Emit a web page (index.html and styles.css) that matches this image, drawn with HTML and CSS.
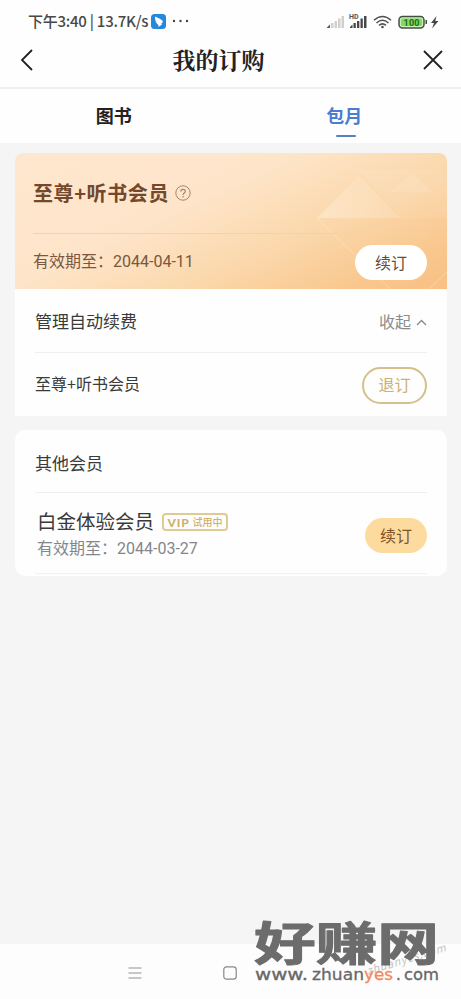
FILE: index.html
```
<!DOCTYPE html>
<html lang="zh-CN">
<head>
<meta charset="utf-8">
<title>我的订购</title>
<link rel="stylesheet" href="styles.css">
</head>
<body>
<div class="status">
  <span class="clock">下午3:40 | 13.7K/s</span>
  <svg class="app" width="15" height="15" viewBox="0 0 15 15"><rect width="15" height="15" rx="3.5" fill="#2488dc"/><path d="M4 2.500c2.500 1.200 6.500 2.700 7.700 4.500.6 1-.6 2.200-1.400 3l.8.4-3.700 2.600.2-1.800C5.200 10 4 6 4 2.500z" fill="#fff"/></svg>
  <svg class="dots" width="17" height="4" viewBox="0 0 17 4" fill="#444"><circle cx="2" cy="2" r="1.200"/><circle cx="8.500" cy="2" r="1.200"/><circle cx="15" cy="2" r="1.200"/></svg>
  <svg class="signals" width="115" height="18" viewBox="0 0 115 18">
    <g fill="#d0d0d0"><rect x="5" y="11" width="2.500" height="5"/><rect x="8.500" y="9" width="2.500" height="7"/><rect x="12" y="6.500" width="2.500" height="9.500"/><rect x="15.500" y="4" width="2.500" height="12"/></g>
    <path d="M.5 16L4 12.500V16z" fill="#555"/>
    <text class="hd" x="23" y="7">HD</text>
    <g fill="#484848"><path d="M24 16v-1l2.500-2.500V16z"/><rect x="27.500" y="11" width="2.300" height="5"/><rect x="31" y="9" width="2.300" height="7"/><rect x="34.500" y="6.500" width="2.300" height="9.500"/><rect x="38" y="4" width="2.500" height="12"/></g>
    <g fill="none" stroke="#505050" stroke-width="1.500"><path d="M48 8.200Q56.500.8 65 8.200"/><path d="M50.500 11Q56.500 5.600 62.500 11"/><path d="M53 13.400Q56.500 10.400 60 13.400"/></g><circle cx="56.500" cy="15" r="1.300" fill="#505050"/>
    <rect x="73" y="4.500" width="25" height="11.500" rx="3.500" fill="#c7f2b5" stroke="#484c48" stroke-width="1.500"/>
    <rect x="75" y="6.500" width="21" height="7.500" rx="1.500" fill="#82d95c"/>
    <text class="level" x="77.500" y="13.600" textLength="16">100</text>
    <rect x="99.500" y="8" width="1.500" height="4" fill="#484848"/>
    <path d="M110.500 4l-5.500 7h3l-2 5.500 6.500-7.500h-3.200z" fill="#484848"/>
  </svg>
</div>
<header class="head">
  <svg width="20" height="24" viewBox="0 0 20 24"><path d="M15 2L5 12l10 10" fill="none" stroke="#222" stroke-width="1.800"/></svg>
  <h1>我的订购</h1>
  <svg width="20" height="20" viewBox="0 0 20 20"><path d="M1 1l18 18M19 1L1 19" stroke="#222" stroke-width="1.800"/></svg>
</header>
<nav class="tabs"><div>图书</div><div class="active">包月</div></nav>
<main>
  <section class="card plan">
    <div class="gold">
      <svg class="facets" width="432" height="136" viewBox="0 0 432 136">
        <defs><linearGradient id="facet" x1="0" y1="1" x2="1" y2="0"><stop offset="0" stop-color="#fff" stop-opacity=".3"/><stop offset="1" stop-color="#fff" stop-opacity=".03"/></linearGradient></defs>
        <path d="M302 65L344 23L386 65z" fill="url(#facet)"/>
        <path d="M344 17H432V65H386z" fill="#fff" opacity=".07"/>
        <path d="M375 39L397 21L418 39z" fill="#fff" opacity=".12"/>
        <path d="M302 65L375 136M414 136L432 119" fill="none" stroke="#ffedd3" stroke-opacity=".45"/>
      </svg>
      <div class="name"><h2>至尊+听书会员</h2><svg width="16" height="16" viewBox="0 0 16 16"><circle cx="8" cy="8" r="7.200" fill="none" stroke="#a48569"/><path d="M5.800 6.500C5.800 3.600 10.300 3.700 10.300 6.300c0 1.700-2.200 1.600-2.200 3.600" fill="none" stroke="#a48569" stroke-width="1.200"/><circle cx="8.100" cy="11.800" r=".8" fill="#a48569"/></svg></div>
      <div class="expiry"><span class="date">有效期至：2044-04-11</span><button class="white">续订</button></div>
    </div>
    <div class="manage"><span>管理自动续费</span><span class="collapse">收起 <svg width="11" height="7" viewBox="0 0 11 7"><path d="M1 6l4.500-4.500L10 6" fill="none" stroke="#888" stroke-width="1.300"/></svg></span></div>
    <div class="renewal"><span>至尊+听书会员</span><button class="outline">退订</button></div>
  </section>
  <section class="card others">
    <div class="others-title">其他会员</div>
    <div class="trial">
      <div><div class="trial-name">白金体验会员<span class="badge"><b>VIP</b><span>试用中</span></span></div><div class="trial-date date">有效期至：2044-03-27</div></div>
      <button class="fill">续订</button>
    </div>
  </section>
</main>
<footer>
  <svg width="14" height="14" viewBox="0 0 14 14"><path d="M.5 2h13M.5 7h13M.5 12h13" stroke="#929292" stroke-width="1.200"/></svg>
  <svg width="14" height="14" viewBox="0 0 14 14"><rect x=".8" y=".8" width="12.400" height="12.400" rx="2.700" fill="none" stroke="#888" stroke-width="1.200"/></svg>
</footer>
<svg class="mark" width="215" height="84" viewBox="0 0 215 84">
  <text class="faint" transform="translate(122 60) rotate(-17)" textLength="82">zhuanyes.com</text>
  <text class="mark-cn" x="8" y="45" textLength="185" lengthAdjust="spacingAndGlyphs">好赚网</text>
  <text class="mark-url" x="9" y="65" textLength="53" lengthAdjust="spacingAndGlyphs">www.</text>
  <text class="mark-url" x="66" y="65" textLength="52" lengthAdjust="spacingAndGlyphs">zhuan</text>
  <text class="mark-url orange" x="118" y="65" textLength="29" lengthAdjust="spacingAndGlyphs">yes</text>
  <text class="mark-url" x="150" y="65">.</text>
  <text class="mark-url" x="158" y="65" textLength="35" lengthAdjust="spacingAndGlyphs">com</text>
</svg>
</body>
</html>
```
FILE: styles.css
```
* { box-sizing: border-box; }
body {
  margin: 0;
  height: 999px;
  display: flex;
  flex-direction: column;
  overflow: hidden;
  background: #f5f5f5;
  color: #3a3a3a;
  font-family: "Noto Sans CJK SC", sans-serif;
  font-size: 16px;
}
svg { display: block; flex: none; }
h1, h2 { margin: 0; }
.status { height: 42px; flex: none; background: #fefefe; display: flex; align-items: center; padding: 0 20px 0 28px; }
.clock { font-size: 15px; font-weight: 500; color: #484848; white-space: nowrap; width: 120px; letter-spacing: -.25px; padding-bottom: 2px; }
.app { margin-left: 3px; }
.dots { margin-left: 6px; }
.signals { margin-left: auto; }
.hd { font: bold 7px Roboto, sans-serif; fill: #555; }
.level { font: bold 9px Roboto, sans-serif; fill: #246b24; }
.head { height: 47px; flex: none; display: grid; grid-template-columns: 20px 1fr 20px; align-items: center; padding: 0 18px 10px 17px; border-bottom: 2px solid #f0f0f0; background: #fefefe; }
.head svg { margin-top: 1px; }
h1 { font: 700 23px/34px "Noto Serif CJK SC", "Noto Sans CJK SC", serif; color: #222; text-align: center; padding-right: 23px; }
.tabs { height: 54px; flex: none; display: grid; grid-template-columns: 1fr 1fr; background: #fefefe; text-align: center; font-size: 18px; line-height: 53px; font-weight: 700; color: #222; }
.tabs div { padding-right: 3px; }
.active { position: relative; color: #4a7cd0; }
.active::after { content: ""; position: absolute; left: 50%; bottom: 6px; width: 20px; height: 2px; margin-left: -10px; border-radius: 1px; background: #587fc4; }
main { flex: 1; padding: 10px 14px 0 15px; }
.card { background: #fefefe; overflow: hidden; }
.plan { height: 263px; border-radius: 8px 8px 0 0; }
.gold { position: relative; height: 136px; padding: 0 20px 0 18px; color: #75482b; background: linear-gradient(155deg, #fee7cf 0%, #fee5ca 38%, #fbd9ae 62%, #f9c68c 88%, #f8c084 100%); }
.facets { position: absolute; left: 0; top: 0; }
.name { position: relative; height: 81px; display: flex; align-items: center; gap: 6px; border-bottom: 1px solid #edd3b5; }
h2 { font-size: 20px; line-height: 28px; letter-spacing: .6px; font-weight: 700; }
.date { font-family: Roboto, "Noto Sans CJK SC", sans-serif; }
.expiry { position: relative; height: 55px; display: flex; align-items: center; justify-content: space-between; color: #79583f; }
.expiry .date { padding-bottom: 3px; }
button { font: 16px/24px "Noto Sans CJK SC", sans-serif; padding: 0 0 2px; border: 0; border-radius: 18px; }
.white { width: 72px; height: 35px; background: #fff; color: #674c38; margin-top: 2px; }
.manage { height: 64px; margin: 0 20px; display: flex; align-items: center; justify-content: space-between; border-bottom: 1px solid #eee; font-size: 17px; }
.collapse { display: flex; align-items: center; gap: 5px; font-size: 16px; color: #8b8b8b; }
.collapse svg { margin-top: 4px; }
.renewal { height: 63px; margin: 0 20px; display: flex; align-items: center; justify-content: space-between; }
.renewal span { padding-bottom: 3px; }
.outline { width: 65px; height: 37px; border: 2px solid #d5c08b; border-radius: 19px; background: transparent; color: #ccb16f; margin-top: 1px; }
.others { height: 146px; margin-top: 14px; border-radius: 10px; padding: 0 20px; }
.others-title { height: 63px; line-height: 65px; font-size: 17px; border-bottom: 1px solid #eee; }
.trial { height: 81px; padding: 0 0 0 2px; display: flex; align-items: center; justify-content: space-between; border-bottom: 1px solid #f2f2f2; }
.trial-name { display: flex; align-items: center; font-size: 19.500px; line-height: 28px; }
.trial-date { color: #85868b; line-height: 24px; padding-top: 2px; margin-bottom: -2px; }
.badge { height: 18px; width: 66px; margin: 2px 0 0 8px; border: 2px solid #e0c992; border-radius: 4px; display: flex; align-items: center; justify-content: center; gap: 3px; color: #d1b16b; font-size: 10px; font-weight: 500; line-height: 14px; white-space: nowrap; }
.badge b { font: 900 12px Lato, sans-serif; letter-spacing: .8px; }
.fill { width: 62px; height: 35px; background: #fddb9f; color: #805426; margin-top: 4px; padding-bottom: 0; }
footer { height: 55px; flex: none; display: flex; align-items: center; padding-left: 128px; gap: 81px; background: #fdfdfd; }
footer svg { margin-top: 2px; }
.mark { position: absolute; left: 246px; top: 915px; }
.mark-cn { font: 700 46px "Noto Sans CJK SC", sans-serif; fill: #6c6c6c; stroke: #6c6c6c; stroke-width: 1px; stroke-linejoin: round; }
.mark-url { font: 15px "DejaVu Sans", sans-serif; fill: #686868; stroke: #686868; stroke-width: .3px; }
.orange { fill: #f5875b; stroke: #f5875b; }
.faint { font: italic 11px "Noto Sans CJK SC", sans-serif; fill: #c4c4c4; }
```
